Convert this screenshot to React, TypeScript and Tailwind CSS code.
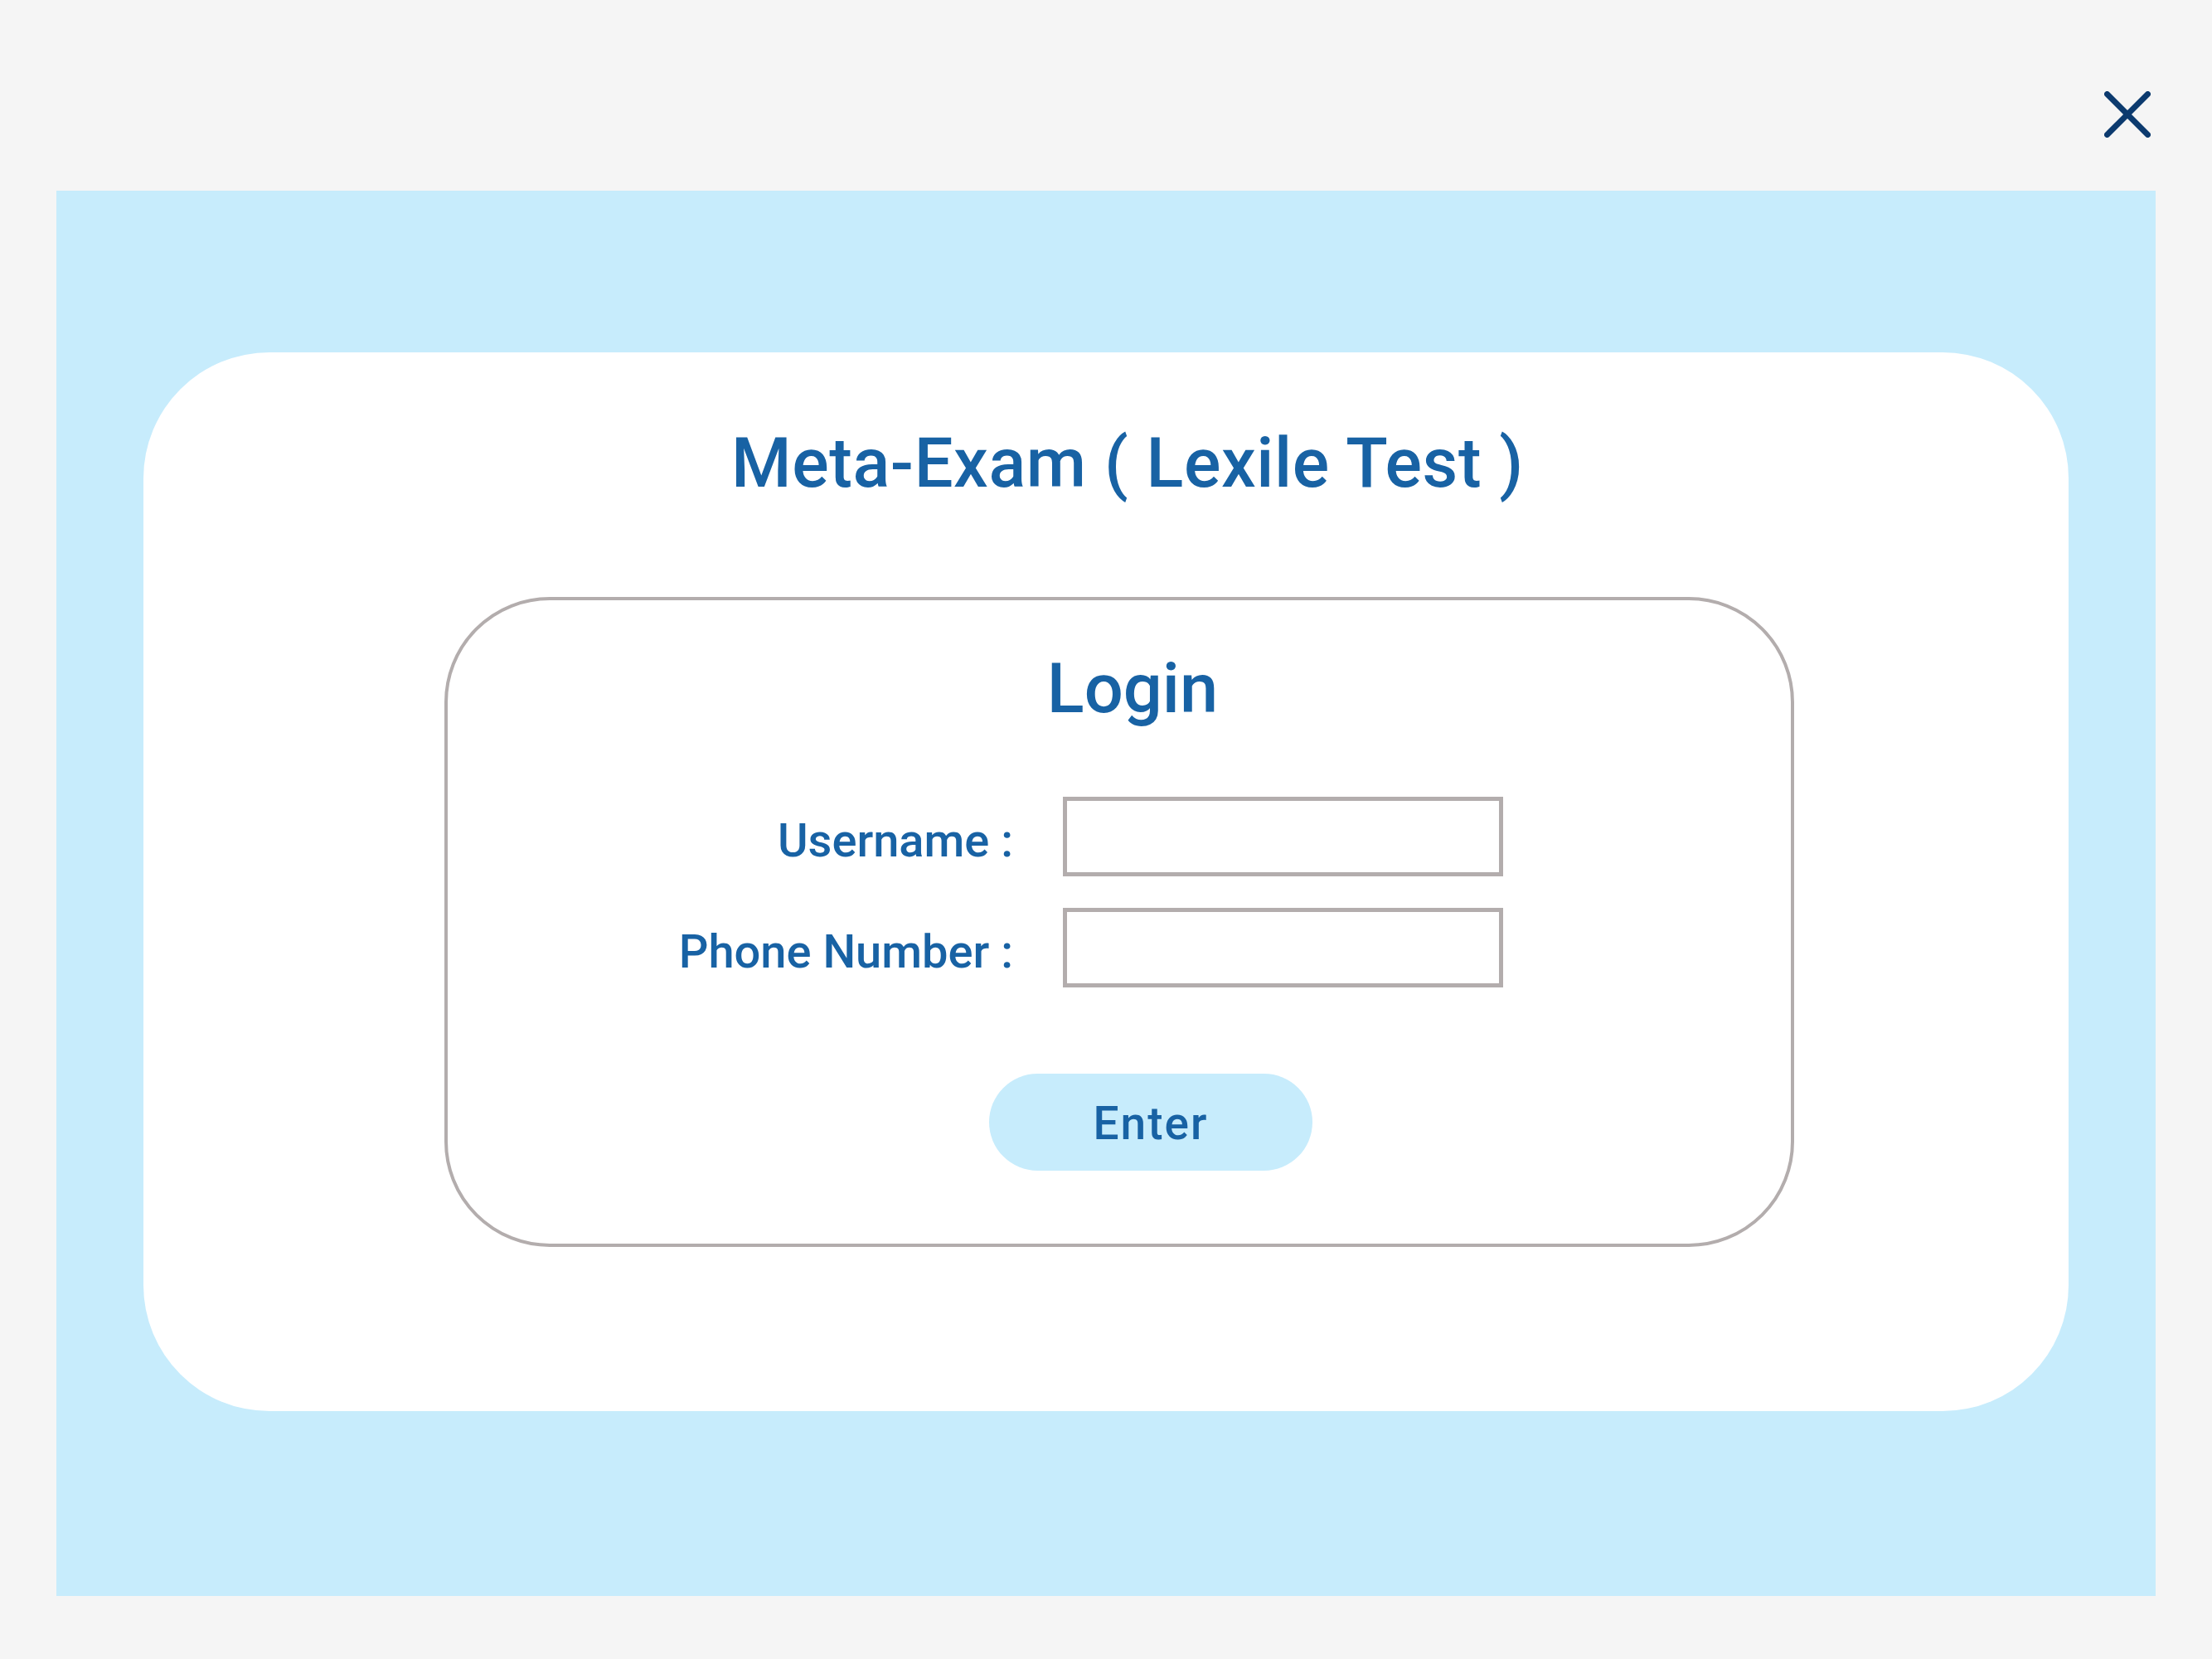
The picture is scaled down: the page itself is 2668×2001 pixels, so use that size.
import React from "react";

const font = { fontFamily: 'Roboto, "Noto Sans", sans-serif' };

function CloseIcon() {
  return (
    <svg width="56" height="56" viewBox="0 0 56 56" fill="none">
      <path
        d="M3.5 3.5 L52.5 52.5 M52.5 3.5 L3.5 52.5"
        stroke="#0c3a6e"
        strokeWidth="7"
        strokeLinecap="round"
      />
    </svg>
  );
}

function Field({ label }: { label: string }) {
  return (
    <div className="flex items-center">
      <div className="w-[682px] mt-[10px] text-right text-[56px] leading-none font-medium text-[#1862a4]">
        {label}
      </div>
      <div className="ml-[60px] w-[531px] h-[96px] border-[5px] border-[#b3adad] bg-white" />
    </div>
  );
}

export default function App() {
  return (
    <div className="w-[2668px] h-[2001px] bg-[#f5f5f5]" style={font}>
      <div className="h-[230px] flex justify-end items-start pt-[110px] pr-[74px]">
        <button type="button">
          <CloseIcon />
        </button>
      </div>
      <div className="mx-[68px] h-[1695px] bg-[#c7ecfc] pt-[195px] px-[105px]">
        <div className="h-[1277px] rounded-[152px] bg-white flex flex-col">
          <h1 className="mt-[92px] pl-[52px] text-center text-[83px] leading-none font-medium tracking-[0.6px] text-[#1862a4]">
            Meta-Exam ( Lexile Test )
          </h1>
          <div className="mt-[120px] ml-[363px] w-[1628px] h-[784px] rounded-[127px] border-[4px] border-[#b3adad] flex flex-col">
            <div className="mt-[65px] pl-[32px] text-center text-[83px] leading-none font-medium text-[#1862a4]">
              Login
            </div>
            <div className="mt-[89px] flex flex-col gap-[38px]">
              <Field label="Username :" />
              <Field label="Phone Number :" />
            </div>
            <button
              type="button"
              className="mt-[104px] ml-[653px] w-[390px] h-[117px] rounded-full bg-[#c7ecfc] flex items-center justify-center pt-[4px] text-[55px] leading-none font-medium text-[#1862a4] tracking-[2px]"
            >
              Enter
            </button>
          </div>
        </div>
      </div>
    </div>
  );
}
